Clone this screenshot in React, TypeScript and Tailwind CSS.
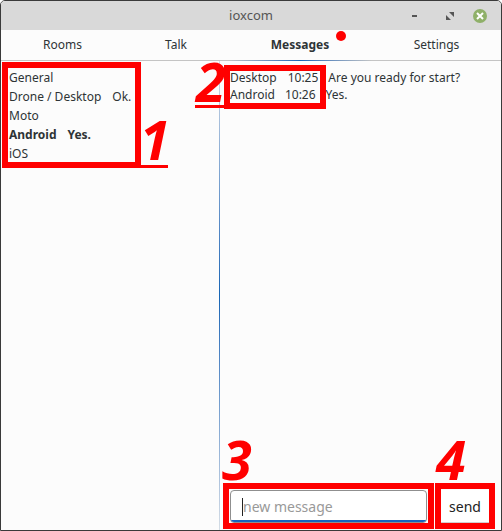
const font = { fontFamily: '"Noto Sans", sans-serif' };

const rooms = [
  { name: "General", last: "" },
  { name: "Drone / Desktop", last: "Ok." },
  { name: "Moto", last: "" },
  { name: "Android", last: "Yes.", unread: true },
  { name: "iOS", last: "" },
];

const App = () => {
  return (
    <div
      className="relative w-[502px] h-[531px] overflow-hidden bg-[#fcfcfc] text-[12px] text-[#2e3436] flex flex-col border border-[#3a3a3a] rounded-t-[5px]"
      style={font}
    >
      {/* title bar */}
      <div className="relative h-[29px] shrink-0 bg-[#d9d9d9] flex items-center justify-center text-[13px] text-[#555]">
        ioxcom
        <div className="absolute left-[411px] top-[14px] w-[5px] h-[2px] bg-[#555]" />
        <svg className="absolute left-[445px] top-[11px]" width="8" height="8" viewBox="0 0 8 8">
          <path d="M3 0h5v5zM0 3l5 5H0z" fill="#555" />
        </svg>
        <div className="absolute left-[472px] top-[8px] w-[14px] h-[14px] rounded-full bg-[#8fb069] flex items-center justify-center">
          <svg width="8" height="8" viewBox="0 0 8 8">
            <path d="M1 1l6 6M7 1l-6 6" stroke="#fff" strokeWidth="2" />
          </svg>
        </div>
      </div>

      {/* tabs */}
      <div className="relative h-[31px] shrink-0 flex items-center text-center border-b border-[#c4c4c4]">
        <div className="w-[123px]">Rooms</div>
        <div className="w-[104px]">Talk</div>
        <div className="w-[144px] font-bold">Messages</div>
        <div className="w-[129px]">Settings</div>
        <div className="absolute left-[227px] w-[144px] bottom-[-1px] h-[1px] bg-linear-to-r from-[#c4c4c4] via-[#1565b5] to-[#c4c4c4]" />
        <div className="absolute left-[335px] top-[1px] w-[10px] h-[10px] rounded-full bg-[#ff0000]" />
      </div>

      <div className="flex-1 flex min-h-0">
        {/* rooms list */}
        <div className="w-[218px] shrink-0 pt-[8px] pl-[8px] flex flex-col">
          {rooms.map((room) => (
            <div key={room.name} className={room.unread ? "h-[19px] font-bold flex gap-[11px]" : "h-[19px] flex gap-[11px]"}>
              <span>{room.name}</span>
              {room.last && <span>{room.last}</span>}
            </div>
          ))}
        </div>
        <div className="w-[1px] shrink-0 bg-linear-to-b from-[#d5dde6] via-[#1565b5] to-[#d5dde6]" />

        {/* messages */}
        <div className="flex-1 flex flex-col pl-[10px] pt-[8px] pr-[6px]">
          <div className="flex flex-col">
            <div className="h-[17px] flex gap-[11px]">
              <span>Desktop</span>
              <span className="mr-[-1px]">10:25</span>
              <span>Are you ready for start?</span>
            </div>
            <div className="h-[17px] flex gap-[10px]">
              <span>Android</span>
              <span>10:26</span>
              <span>Yes.</span>
            </div>
          </div>

          <div className="mt-auto mb-[7px] flex items-center gap-[13px]">
            <div className="relative w-[197px] h-[33px] rounded-[4px] border border-[#8f8f8f] bg-white flex items-center pl-[11px] text-[14px] text-[#999] overflow-hidden">
              <span className="w-[1px] h-[18px] bg-[#222]" />
              new message
              <div className="absolute left-0 right-0 bottom-0 h-[2px] bg-[#1565c0]" />
            </div>
            <div className="w-[50px] h-[33px] bg-white border-b border-[#d0d0d0] flex items-center justify-center text-[14px] text-[#222]">send</div>
          </div>
        </div>
      </div>

      {/* annotations drawn over the screenshot */}
      <div className="absolute left-[1px] top-[61px] w-[139px] h-[106px] border-[6px] border-[#ff0000]" />
      <div className="absolute left-[139px] top-[164px] w-[28px] h-[3px] bg-[#ff0000]" />
      <div className="absolute left-[223px] top-[64px] w-[102px] h-[44px] border-[6px] border-[#ff0000]" />
      <div className="absolute left-[194px] top-[104px] w-[30px] h-[3px] bg-[#ff0000]" />
      <div className="absolute left-[222px] top-[482px] w-[211px] h-[46px] border-[6px] border-[#ff0000]" />
      <div className="absolute left-[434px] top-[482px] w-[60px] h-[46px] border-[6px] border-[#ff0000]" />

      <span className="absolute left-[139px] top-[103px] text-[54px] leading-[70px] font-bold italic text-[#ff0000]">1</span>
      <span className="absolute left-[195px] top-[45px] text-[54px] leading-[70px] font-bold italic text-[#ff0000]">2</span>
      <span className="absolute left-[221px] top-[423px] text-[54px] leading-[70px] font-bold italic text-[#ff0000]">3</span>
      <span className="absolute left-[435px] top-[423px] text-[54px] leading-[70px] font-bold italic text-[#ff0000]">4</span>
    </div>
  );
};

export default App;
